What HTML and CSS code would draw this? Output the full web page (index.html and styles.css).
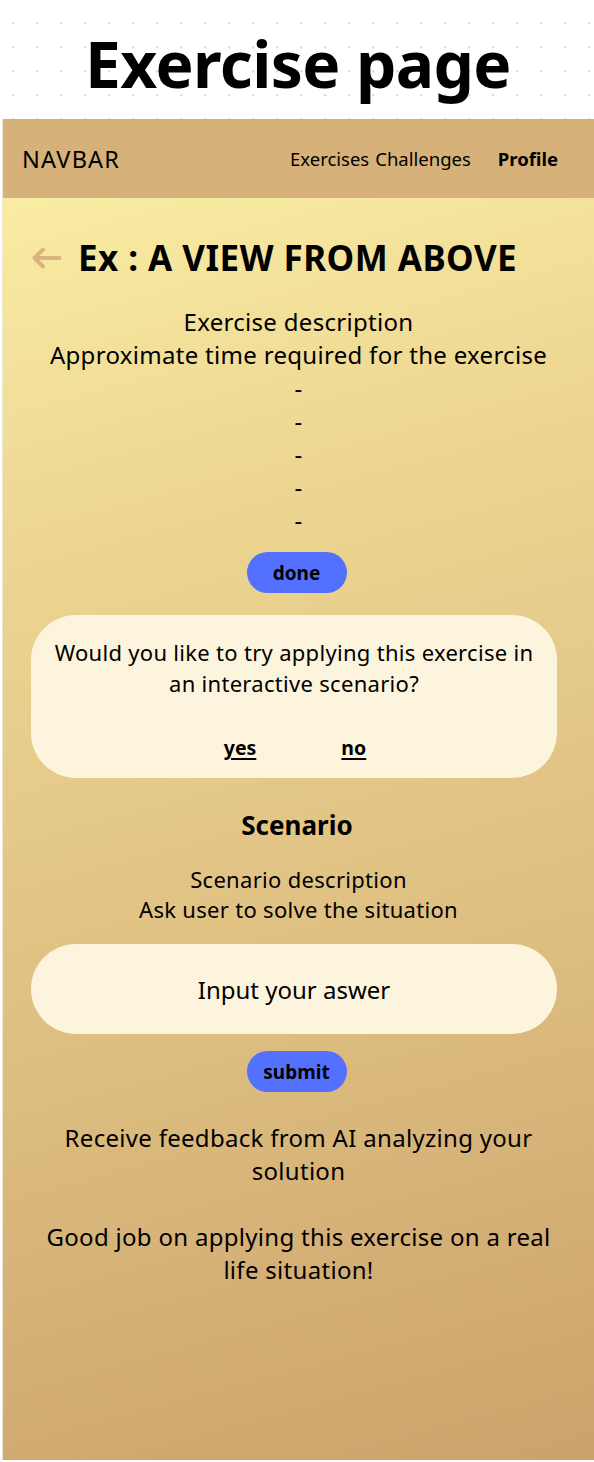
FILE: index.html
```html
<!DOCTYPE html>
<html>
<head>
<meta charset="utf-8">
<link rel="stylesheet" href="styles.css">
</head>
<body>
<header class="canvas-head">
  <h1 class="page-title">Exercise page</h1>
</header>
<div class="frame">
  <nav class="navbar">
    <div class="brand">NAVBAR</div>
    <div class="links">
      <span class="link">Exercises</span>
      <span class="link">Challenges</span>
      <span class="link strong">Profile</span>
    </div>
  </nav>
  <main class="content">
    <div class="title-row">
      <svg class="back" width="32" height="24" viewBox="0 0 32 24"><path d="M29.5 12H4.5M13 3.5L4.5 12l8.5 8.5" fill="none" stroke="#d9b480" stroke-width="4" stroke-linecap="round" stroke-linejoin="round"/></svg>
      <h2 class="ex-title">Ex : A VIEW FROM ABOVE</h2>
    </div>
    <div class="desc">
      <p>Exercise description</p>
      <p>Approximate time required for the exercise</p>
      <p>-</p><p>-</p><p>-</p><p>-</p><p>-</p>
    </div>
    <button class="pill done">done</button>
    <section class="card">
      <p class="card-q">Would you like to try applying this exercise in an interactive scenario?</p>
      <div class="choices">
        <a class="choice">yes</a>
        <a class="choice">no</a>
      </div>
    </section>
    <h3 class="scenario">Scenario</h3>
    <div class="scen-desc">
      <p>Scenario description</p>
      <p>Ask user to solve the situation</p>
    </div>
    <div class="answer">Input your aswer</div>
    <button class="pill submit">submit</button>
    <p class="feedback first">Receive feedback from AI analyzing your solution</p>
    <p class="feedback second">Good job on applying this exercise on a real life situation!</p>
  </main>
</div>
</body>
</html>
```
FILE: styles.css
```css
html, body {
  margin: 0;
  padding: 0;
}
body {
  width: 594px;
  height: 1462px;
  overflow: hidden;
  background-color: #ffffff;
  background-image: radial-gradient(circle, #ccd0dc 1.1px, transparent 1.6px);
  background-size: 24px 24px;
  background-position: 1.3px 11.3px;
  font-family: "Noto Sans", "Open Sans", sans-serif;
  color: #000;
}
.canvas-head {
  height: 119px;
  box-sizing: border-box;
  padding-top: 20px;
  text-align: center;
}
.page-title {
  margin: 0;
  font-size: 64px;
  font-weight: 700;
  letter-spacing: -0.6px;
  line-height: normal;
  padding-left: 2px;
}
.frame {
  margin-left: 3px;
  height: 1341px;
  display: flex;
  flex-direction: column;
  background: linear-gradient(165deg, #fcf1a7 0%, #ecd591 30%, #ddbd80 65%, #cba26b 100%);
  box-shadow: -1px 0 0 #efe6d2;
}
.navbar {
  height: 79px;
  flex: none;
  background: #d6b27a;
  display: flex;
  align-items: center;
  justify-content: space-between;
  padding: 0 36px 0 19px;
}
.brand {
  font-size: 23.5px;
  font-weight: 400;
  letter-spacing: 1.2px;
}
.links {
  display: flex;
  gap: 6px;
  font-size: 18.5px;
}
.link.strong {
  font-weight: 700;
  margin-left: 21px;
}
.content {
  display: flex;
  flex-direction: column;
  align-items: center;
  text-align: center;
}
.content p { margin: 0; }
.title-row {
  align-self: stretch;
  display: flex;
  align-items: center;
  padding: 38px 0 0 27px;
  gap: 16px;
}
.back { flex: none; }
.ex-title {
  margin: 0;
  font-size: 35px;
  font-weight: 700;
  letter-spacing: 0.45px;
  line-height: 44px;
}
.desc {
  margin-top: 25px;
  font-size: 24px;
  letter-spacing: 0.3px;
  line-height: 33px;
}
.pill {
  border: none;
  background: #5470fe;
  border-radius: 21px;
  width: 100px;
  height: 41px;
  margin-right: 4px;
  font-family: inherit;
  font-size: 19px;
  font-weight: 700;
  color: #000;
  padding: 0;
}
.done { margin-top: 16px; }
.card {
  margin-top: 22px;
  align-self: flex-start;
  margin-left: 28px;
  width: 526px;
  height: 163px;
  box-sizing: border-box;
  background: #fcf4dc;
  border-radius: 45px;
  padding: 22px 14px 0;
}
.card-q {
  font-size: 22px;
  letter-spacing: 0.3px;
  line-height: 31px;
}
.choices {
  display: flex;
  justify-content: center;
  gap: 85px;
  margin-top: 35px;
  font-size: 19.5px;
  font-weight: 700;
  padding-left: 2px;
}
.choice {
  text-decoration: underline;
  text-underline-offset: 3px;
  text-decoration-thickness: 2px;
}
.scenario {
  margin: 30px 3px 0 0;
  font-size: 26px;
  font-weight: 700;
  line-height: 34px;
}
.scen-desc {
  margin-top: 22px;
  font-size: 22px;
  letter-spacing: 0.3px;
  line-height: 30px;
}
.answer {
  margin-top: 20px;
  align-self: flex-start;
  margin-left: 28px;
  width: 526px;
  height: 90px;
  background: #fcf4dc;
  border-radius: 45px;
  display: flex;
  align-items: center;
  justify-content: center;
  font-size: 24px;
}
.submit { margin-top: 17px; }
.feedback {
  font-size: 24px;
  letter-spacing: 0.3px;
  line-height: 33px;
  width: 520px;
}
.feedback.first { margin-top: 29px; }
.feedback.second { margin-top: 33px; }
```
